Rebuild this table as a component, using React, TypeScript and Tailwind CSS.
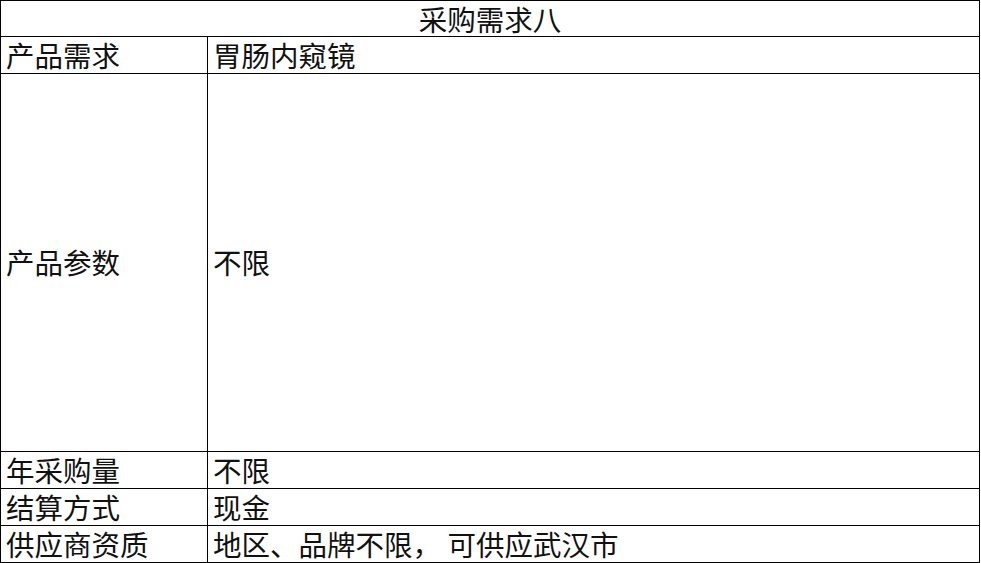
const rows = [
  { label: '产品需求', value: '胃肠内窥镜', h: 'h-[37px]' },
  { label: '产品参数', value: '不限', h: 'h-[378px]' },
  { label: '年采购量', value: '不限', h: 'h-[37px]' },
  { label: '结算方式', value: '现金', h: 'h-[37px]' },
  { label: '供应商资质', value: '地区、品牌不限，\u00a0可供应武汉市', h: 'h-[36px]' },
]

export default function App() {
  return (
    <div
      className="w-[981px] h-[563px] bg-white text-[#111]"
      style={{ fontFamily: '"Noto Sans CJK SC", "Noto Sans", sans-serif' }}
    >
      <div className="w-[980px] h-[563px] border border-black flex flex-col">
        <div className="h-[36px] border-b border-black flex items-center justify-center text-[28.5px] leading-[30px]">
          采购需求八
        </div>
        {rows.map((row, idx) => (
          <div
            key={row.label}
            className={`${row.h} flex ${idx < rows.length - 1 ? 'border-b border-black' : ''}`}
          >
            <div className="w-[207px] shrink-0 border-r border-black flex items-center pl-[5px] text-[28.5px] leading-none whitespace-pre">
              {row.label}
            </div>
            <div className="flex-1 flex items-center pl-[5px] text-[28.5px] leading-none whitespace-pre">
              {row.value}
            </div>
          </div>
        ))}
      </div>
    </div>
  )
}
